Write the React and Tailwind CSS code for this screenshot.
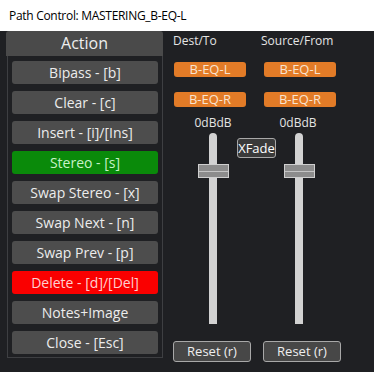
import React from 'react'

const actions = [
  { label: 'Bipass - [b]', styles: 'bg-[#4d4d4d] text-[#ececec]' },
  { label: 'Clear - [c]', styles: 'bg-[#4d4d4d] text-[#ececec]' },
  { label: 'Insert - [i]/[Ins]', styles: 'bg-[#4d4d4d] text-[#ececec]' },
  { label: 'Stereo - [s]', styles: 'bg-[#0a8a0a] text-[#c8f2c8]' },
  { label: 'Swap Stereo - [x]', styles: 'bg-[#4d4d4d] text-[#ececec]' },
  { label: 'Swap Next - [n]', styles: 'bg-[#4d4d4d] text-[#ececec]' },
  { label: 'Swap Prev - [p]', styles: 'bg-[#4d4d4d] text-[#ececec]' },
  { label: 'Delete - [d]/[Del]', styles: 'bg-[#fa0000] text-[#ffd0d0]' },
  { label: 'Notes+Image', styles: 'bg-[#4d4d4d] text-[#ececec]' },
  { label: 'Close - [Esc]', styles: 'bg-[#4d4d4d] text-[#ececec]' },
]

const Badge = ({ text }) => (
  <div className="ml-[1px] w-[72px] h-[15px] rounded-[3px] bg-[#e27b27] text-[#f8e4d2] text-[13px] leading-[15px] text-center">
    {text}
  </div>
)

const Fader = ({ offset }) => (
  <div className={`relative h-[191px] ${offset}`}>
    <div className="w-[8px] h-full rounded-t-[4px] bg-[#d2d2d2]"></div>
    <div className="absolute top-[31px] left-[-11px] w-[31px] h-[14px] border border-[#cfcfcf] bg-[#8c8c8c] flex flex-col justify-center">
      <div className="h-[1px] bg-[#c4c4c4]"></div>
    </div>
  </div>
)

const Reset = () => (
  <button className="w-[78px] h-[21px] rounded-[3px] border border-[#a8a8a8] bg-[#474747] text-[#eeeeee] text-[13px] leading-[19px]">
    Reset (r)
  </button>
)

const App = () => {
  return (
    <div className="w-[374px] h-[372px] bg-[#1f2023] overflow-hidden" style={{ fontFamily: '"Open Sans", "Noto Sans", sans-serif' }}>
      <div className="h-[31px] bg-white flex items-center pl-[9px] text-[12px] tracking-[-0.3px] text-black">
        Path Control: MASTERING_B-EQ-L
      </div>

      <div className="flex">
        {/* action panel */}
        <div className="ml-[6px] w-[157px]">
          <div className="h-[25px] bg-[#4a4a4a] rounded-t-[3px] text-[#eeeeee] text-[16px] leading-[25px] text-center">Action</div>
          <div className="ml-[1px] w-[156px] border-x border-b border-[#3e3f42] px-[4px] pt-[5px] pb-[3px] flex flex-col gap-[7px]">
            {actions.map((a) => (
              <button key={a.label} className={`h-[23px] rounded-[3px] text-[14px] leading-[23px] text-center ${a.styles}`}>
                {a.label}
              </button>
            ))}
          </div>
        </div>

        {/* dest / source */}
        <div className="relative ml-[10px] flex gap-[12px]">
          <div className="w-[78px] flex flex-col">
            <div className="h-[20px] text-[12px] leading-[20px] text-[#e4e4e4]">Dest/To</div>
            <div className="mt-[11px] flex flex-col gap-[15px]">
              <Badge text="B-EQ-L" />
              <Badge text="B-EQ-R" />
            </div>
            <div className="mt-[8px] h-[16px] pl-[2px] text-[12px] leading-[16px] text-[#e4e4e4] text-center">0dBdB</div>
            <Fader offset="mt-[2px] ml-[36px]" />
            <div className="mt-[14px]"><Reset /></div>
          </div>
          <div className="w-[78px] flex flex-col">
            <div className="h-[20px] -ml-[2px] text-[12px] leading-[20px] text-[#e4e4e4]">Source/From</div>
            <div className="mt-[11px] flex flex-col gap-[15px]">
              <Badge text="B-EQ-L" />
              <Badge text="B-EQ-R" />
            </div>
            <div className="mt-[8px] h-[16px] pr-[8px] text-[12px] leading-[16px] text-[#e4e4e4] text-center">0dBdB</div>
            <Fader offset="mt-[2px] ml-[32px]" />
            <div className="mt-[14px]"><Reset /></div>
          </div>
          <button className="absolute top-[107px] left-[64px] w-[39px] h-[20px] rounded-[3px] border border-[#a8a8a8] bg-[#3a3a3a] text-white text-[13px] leading-[18px]">
            XFade
          </button>
        </div>
      </div>
    </div>
  )
}

export default App
